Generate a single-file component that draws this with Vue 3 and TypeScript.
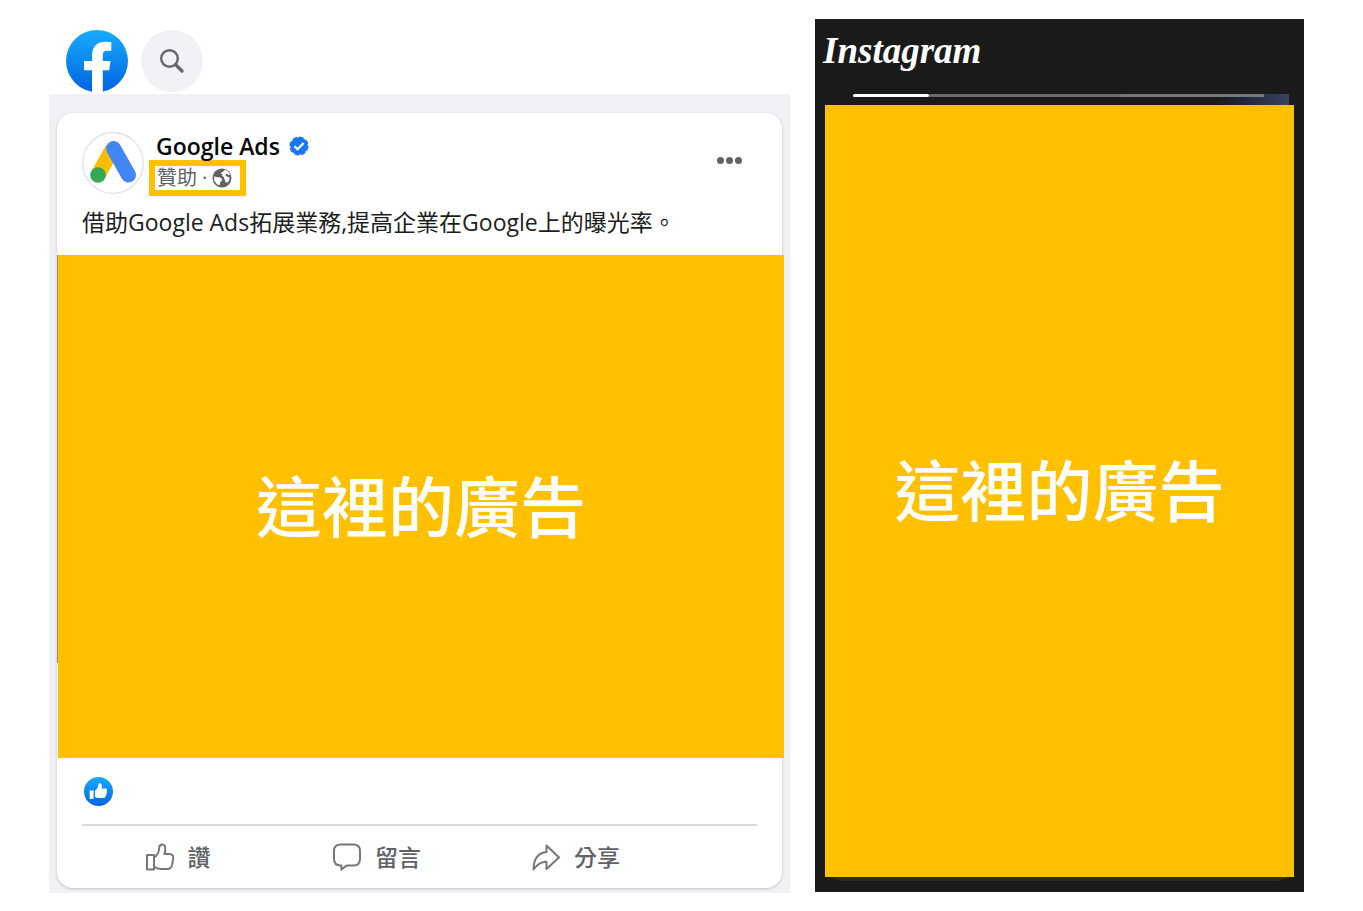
<script setup lang="ts">
interface Segment {
  tone: 'seen' | 'next' | 'last'
  share: number
}

const adLabel: string = '這裡的廣告'

const segments: Segment[] = [
  { tone: 'seen', share: 76 },
  { tone: 'next', share: 192 },
  { tone: 'last', share: 143 },
]
</script>

<template>
  <main class="page" lang="zh-Hant">
    <section class="facebook" aria-label="Facebook">
      <header class="fb-bar">
        <svg class="fb-logo" viewBox="0 0 62 62" role="img" aria-label="Facebook">
          <defs>
            <linearGradient id="fb-blue" x1="0" y1="0" x2="0" y2="1">
              <stop offset="0" stop-color="#18acfe" />
              <stop offset="1" stop-color="#0163e0" />
            </linearGradient>
          </defs>
          <circle cx="31" cy="31" r="31" fill="url(#fb-blue)" />
          <path
            fill="#fff"
            d="M26 62V40.300h-8v-9.300h8v-5c0-9 4.800-14.200 13-14.200 2.500 0 4.700.2 6.300.5v8.500h-4c-3.400 0-4.500 1.800-4.500 4.400v5.800h7.700l-1.300 9.300h-6.400v21.700z"
          />
        </svg>
        <button class="search" type="button" aria-label="搜尋">
          <svg viewBox="0 0 26 26">
            <circle cx="10.500" cy="10.500" r="8.300" fill="none" stroke="#65676b" stroke-width="2.400" />
            <path d="M16.500 16.500l6.500 6.500" stroke="#65676b" stroke-width="3.400" stroke-linecap="round" />
          </svg>
        </button>
      </header>

      <div class="feed">
        <article class="card">
          <header class="post-head">
            <svg class="avatar" viewBox="0 0 62 62" aria-hidden="true">
              <circle cx="31" cy="31" r="30.300" fill="#fff" stroke="#dddfe4" stroke-width="1.200" />
              <path d="M30.500 17L16.500 42" stroke="#fbbc04" stroke-width="15" />
              <path d="M31.500 16.500L46.500 43" stroke="#4285f4" stroke-width="15" stroke-linecap="round" />
              <circle cx="16" cy="43" r="7.800" fill="#34a853" />
            </svg>
            <div class="who">
              <h1 class="name">
                Google Ads
                <svg class="verified" viewBox="0 0 20 20" role="img" aria-label="已驗證">
                  <circle cx="10" cy="10" r="8.800" fill="#1877f2" stroke="#1877f2" stroke-width="1.600" stroke-dasharray="4.600 2.300" />
                  <path d="M5.400 10.200l3.200 3 6-6.200" fill="none" stroke="#fff" stroke-width="2.200" />
                </svg>
              </h1>
              <p class="sponsored">
                <span>贊助</span><span>·</span>
                <svg class="globe" viewBox="0 0 20 20" role="img" aria-label="公開">
                  <circle cx="10" cy="10" r="9.500" fill="#606266" />
                  <path
                    fill="#fff"
                    d="M2.300 8.300l2.400.9 2.700 0 2.500 1.500-.1 2-1.700 1.500-.4 3.300-3-1.500L2.100 12.500zM8.700 4.900l2.300-1.200 2.200-1.900 3.200 2 1.900 3.200-1.900-.2-1.900-1.200-1.100 1.600 1.700 1.600 2.500.4-.3 3-1.900 2.500-2-.8-.9-2.700-.6-1.900-2-1.500.6-1.900-1.900-.5z"
                  />
                </svg>
              </p>
            </div>
            <button class="more" type="button" aria-label="更多選項"><i></i><i></i><i></i></button>
          </header>
          <p class="copy">借助Google Ads拓展業務,提高企業在Google上的曝光率。</p>
          <div class="media">
            <div class="ad fb-ad">{{ adLabel }}</div>
          </div>
          <div class="reactions">
            <svg viewBox="0 0 28 28" role="img" aria-label="讚">
              <circle cx="14" cy="14" r="14" fill="url(#fb-blue)" />
              <path
                fill="#fff"
                d="M5.500 13h3.700v8.300H5.500zM10.500 13.200c2.200-1.200 3.300-3.300 3.500-6.200.1-1 1.200-1.400 2.100-.8 1.400.9 1.400 3 .8 5h3.700c1.500 0 2.200 1.600 1.200 2.600.7.800.6 1.900-.3 2.500.4.900 0 1.700-.8 2.100.2 1.200-.5 1.900-1.800 1.900h-4.500c-1.500 0-2.700-.4-3.900-1.100z"
              />
            </svg>
          </div>
          <footer class="actions">
            <button type="button">
              <svg viewBox="0 0 30 30">
                <path
                  d="M2 13h7v14.500H2zM9 15.500c3-1.600 4.900-4.500 5.200-9.500.2-4.300 5.200-4.600 6-.6.5 2.600-.1 4.700-.8 6.600h4.800c3.500 0 4.400 1.900 4 4.500l-1.200 6.500c-.6 2.700-2.200 4-4.700 4h-6.300c-3 0-5-.8-7-2.200"
                />
              </svg>
              讚
            </button>
            <button type="button">
              <svg viewBox="0 0 30 30">
                <path
                  d="M8.500 2.500h13c4 0 6.500 2.500 6.500 6.500v8c0 4-2.500 6.500-6.500 6.500h-6.500c-2 .8-3.500 2.400-5.600 4.200v-4.300h-.9c-4 0-6.500-2.400-6.500-6.400v-8c0-4 2.500-6.500 6.500-6.500z"
                />
              </svg>
              留言
            </button>
            <button type="button">
              <svg viewBox="0 0 30 30">
                <path
                  d="M15.500 3.500L28 15.500 15.500 27v-7.200c-5-.2-8.500 1.700-13 7.700.2-9.500 4-16.700 13-17.500z"
                />
              </svg>
              分享
            </button>
          </footer>
        </article>
      </div>
    </section>

    <section class="instagram" aria-label="Instagram">
      <h2 class="wordmark">Instagram</h2>
      <div class="story-top">
        <div class="segments">
          <span
            v-for="segment in segments"
            :key="segment.tone"
            :class="segment.tone"
            :style="{ flexGrow: segment.share }"
          ></span>
        </div>
      </div>
      <div class="ad ig-ad">{{ adLabel }}</div>
      <div class="story-edge"></div>
    </section>
  </main>
</template>

<style>
body {
  background: #fff;
}
</style>

<style scoped>
.page {
  display: grid;
  grid-template-columns: 741fr 489fr;
  align-items: start;
  gap: 25px;
  padding: 19px 59px 18px 49px;
  font-family: 'Open Sans', 'Noto Sans CJK TC', sans-serif;
  color: #1c1e21;
}

h1,
h2,
p {
  margin: 0;
}

button {
  padding: 0;
  border: 0;
  background: none;
  font: inherit;
  color: inherit;
  cursor: pointer;
}

.fb-bar {
  display: flex;
  gap: 13px;
  padding: 11px 17px 2px;
}

.fb-logo {
  width: 62px;
  height: 62px;
}

.search {
  display: grid;
  place-items: center;
  width: 62px;
  height: 62px;
  border-radius: 50%;
  background: #f0f2f5;
}

.search svg {
  width: 26px;
  height: 26px;
}

.feed {
  padding: 19px 8px 5px;
  background: #f0f1f5;
}

.card {
  border-radius: 16px;
  background: #fff;
  box-shadow: 0 1px 3px rgba(0, 0, 0, 0.2);
}

.post-head {
  display: flex;
  gap: 5px;
  padding: 19px 40px 0 25px;
}

.avatar {
  width: 62px;
  height: 62px;
}

.who {
  flex: 1;
}

.name {
  display: flex;
  align-items: center;
  gap: 9px;
  padding-left: 7px;
  font-size: 23px;
  line-height: 28px;
  font-weight: 600;
  color: #08090a;
}

.verified {
  width: 20px;
  height: 20px;
}

.sponsored {
  display: flex;
  align-items: center;
  gap: 5px;
  width: max-content;
  padding: 0 8px 0 2px;
  border: 6px solid #ffc000;
  font-size: 20px;
  line-height: 24px;
  color: #606266;
}

.globe {
  width: 20px;
  height: 20px;
}

.more {
  display: flex;
  align-items: center;
  gap: 2px;
  height: 56px;
}

.more i {
  width: 7px;
  height: 7px;
  border-radius: 50%;
  background: #606266;
}

.copy {
  padding: 10px 25px 17px;
  font-size: 23px;
  line-height: 32px;
}

.media {
  margin-right: -2px;
  padding-left: 1px;
  background: linear-gradient(#8d8f93, #8d8f93) left top / 1px 408px no-repeat;
}

.ad {
  display: grid;
  place-items: center;
  box-sizing: border-box;
  padding-bottom: 8px;
  background: #ffc000;
  color: #fff;
  font-family: 'Noto Sans CJK TC', sans-serif;
  font-size: 66px;
  line-height: 80px;
  font-weight: 500;
}

.fb-ad {
  min-height: 503px;
}

.reactions {
  margin: 0 25px;
  padding: 19px 2px 18px;
  border-bottom: 2px solid #dadbdf;
}

.reactions svg {
  display: block;
  width: 29px;
  height: 29px;
}

.actions {
  display: grid;
  grid-template-columns: repeat(3, 1fr);
  padding: 0 107px 0 21px;
  height: 62px;
}

.actions button {
  display: flex;
  align-items: center;
  justify-content: center;
  gap: 13px;
  font-size: 23px;
  line-height: 32px;
  font-weight: 500;
  color: #606266;
}

.actions svg {
  width: 30px;
  height: 30px;
  fill: none;
  stroke: #74787d;
  stroke-width: 2;
  stroke-linejoin: round;
}

.instagram {
  padding-bottom: 11px;
  background: #1a1a1a;
}

.wordmark {
  height: 75px;
  padding-left: 8px;
  font-family: 'Liberation Serif', serif;
  font-size: 37px;
  line-height: 64px;
  font-style: italic;
  font-weight: 700;
  color: #fff;
}

.story-top {
  height: 11px;
  margin: 0 15px;
  padding: 0 25px 0 23px;
  background: linear-gradient(100deg, transparent 84%, #1f2638 90%, #3a445b 100%);
}

.segments {
  display: flex;
}

.segments span {
  flex-basis: 0;
  height: 3px;
}

.segments .seen {
  border-radius: 2px;
  background: #fff;
}

.segments .next {
  background: #6b6b6b;
}

.segments .last {
  background: #77777b;
}

.ig-ad {
  min-height: 772px;
  margin: 0 10px;
}

.story-edge {
  height: 4px;
  margin: 0 15px;
  background: #30262e;
  clip-path: polygon(0 0, 100% 0, calc(100% - 10px) 100%, 10px 100%);
}
</style>
